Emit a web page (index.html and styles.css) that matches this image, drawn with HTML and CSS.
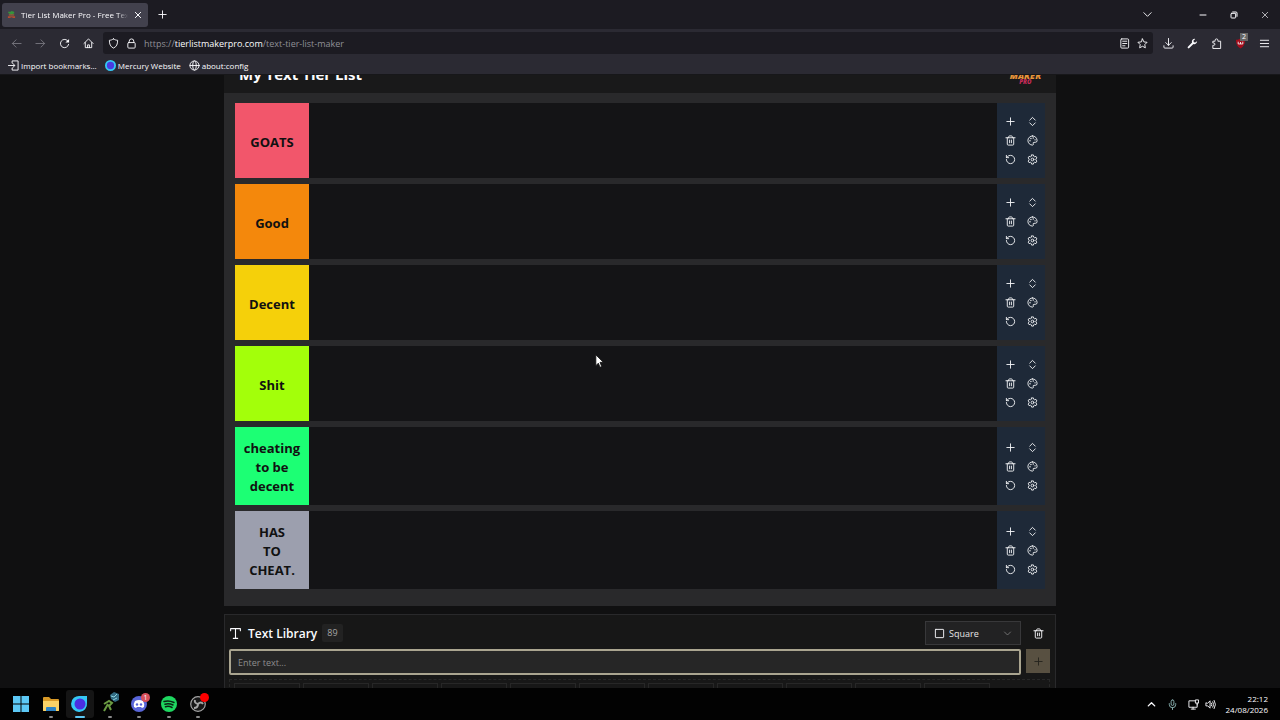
FILE: index.html
```html
<!DOCTYPE html>
<html lang="en">

<head>
    <meta charset="UTF-8">
    <title>Tier List Maker Pro - Free Text Tier List</title>
    <meta name="viewport" content="width=device-width, initial-scale=1.0">
    <link rel="stylesheet" href="styles.css">
</head>

<body>
    <!-- Shared icons -->
    <svg class="sprite" aria-hidden="true">
        <symbol id="i-plus" viewBox="0 0 24 24"><path d="M4 12h16M12 4v16"/></symbol>
        <symbol id="i-sort" viewBox="0 0 24 24"><path d="m6 9 6-6 6 6M6 15l6 6 6-6"/></symbol>
        <symbol id="i-trash" viewBox="0 0 24 24"><path d="M2 6h20M19 6v14a2 2 0 0 1-2 2H7a2 2 0 0 1-2-2V6M8 6V4a2 2 0 0 1 2-2h4a2 2 0 0 1 2 2v2M10 11v6M14 11v6"/></symbol>
        <symbol id="i-palette" viewBox="0 0 24 24"><path d="M12 2a10 10 0 0 0 0 20 2 2 0 0 0 1.700-3.200A2 2 0 0 1 15.300 16H18a4 4 0 0 0 4-4C22 6.500 17.500 2 12 2z"/><path d="M6.500 12.500h.1M8.500 7.500h.1M13.500 6.500h.1M17.500 10.500h.1" stroke-width="3"/></symbol>
        <symbol id="i-reset" viewBox="0 0 24 24"><path d="M3 12a9 9 0 1 0 9-9 9.700 9.700 0 0 0-6.700 2.700L3 8M3 3v5h5"/></symbol>
        <symbol id="i-gear" viewBox="0 0 24 24"><path d="M10 2h4l.7 3 1.800 1 3-.9 2 3.500L19.300 11v2l2.200 2.400-2 3.500-3-.9-1.800 1-.7 3h-4l-.7-3-1.800-1-3 .9-2-3.500L4.700 13v-2L2.500 8.600l2-3.500 3 .9 1.800-1z"/><circle cx="12" cy="12" r="3"/></symbol>
        <symbol id="i-down" viewBox="0 0 24 24"><path d="m4 8 8 8 8-8"/></symbol>
        <symbol id="i-close" viewBox="0 0 24 24"><path d="M4 4l16 16M20 4 4 20"/></symbol>
    </svg>

    <header class="browser">
        <div class="tabbar">
            <div class="tab">
                <svg class="favicon" viewBox="0 0 10 10"><path d="M1 2h3l1-1 3 1v2L5 5 2 4z" fill="#37933c"/><path d="M2 5h6v1H2z" fill="#bd722e"/><path d="M1 7h8v2H7L5 8 3 9H1z" fill="#b44c30"/></svg>
                <span class="tab-title">Tier List Maker Pro - Free Text Tier List</span>
                <button class="tab-close" aria-label="Close tab"><svg class="icon small"><use href="#i-close"/></svg></button>
            </div>
            <button class="new-tab" aria-label="New tab"><svg class="icon"><use href="#i-plus"/></svg></button>
            <div class="window-buttons">
                <button class="list-tabs" aria-label="List all tabs"><svg class="icon"><use href="#i-down"/></svg></button>
                <button aria-label="Minimize"><svg class="icon small" viewBox="0 0 24 24"><path d="M3 12h18"/></svg></button>
                <button aria-label="Restore"><svg class="icon small" viewBox="0 0 24 24"><rect x="3" y="7" width="14" height="14" rx="2"/><path d="M8 3h10a3 3 0 0 1 3 3v10"/></svg></button>
                <button aria-label="Close"><svg class="icon small thin"><use href="#i-close"/></svg></button>
            </div>
        </div>

        <div class="navbar">
            <button class="nav-btn off" aria-label="Back"><svg class="icon" viewBox="0 0 24 24"><path d="M22 12H3M11 4l-8 8 8 8"/></svg></button>
            <button class="nav-btn off" aria-label="Forward"><svg class="icon" viewBox="0 0 24 24"><path d="M2 12h19M13 4l8 8-8 8"/></svg></button>
            <button class="nav-btn" aria-label="Reload"><svg class="icon" viewBox="0 0 24 24"><path d="M21 14a9 9 0 1 1-2.500-8.300L21 8"/><path d="M22 2v8h-8z" fill="currentColor" stroke="none"/></svg></button>
            <button class="nav-btn" aria-label="Home"><svg class="icon" viewBox="0 0 24 24"><path d="M2 12 12 2l10 10M5 10v11h14V10M10 21v-6h4v6"/></svg></button>
            <div class="urlbar">
                <svg class="icon" viewBox="0 0 24 24"><path d="M12 2c3 2 6 3 9 3 0 8-2 14-9 17C5 19 3 13 3 5c3 0 6-1 9-3z"/></svg>
                <svg class="icon" viewBox="0 0 24 24"><rect x="4" y="10" width="16" height="12" rx="2"/><path d="M7 10V7a5 5 0 0 1 10 0v3"/></svg>
                <p class="url">https://<b>tierlistmakerpro.com</b>/text-tier-list-maker</p>
                <svg class="icon" viewBox="0 0 24 24"><rect x="4" y="2" width="17" height="20" rx="2"/><path d="M8 7h9M8 12h9M8 17h5"/></svg>
                <svg class="icon" viewBox="0 0 24 24"><path d="m12 2 3 6.500 7 .9-5 5 1.200 7L12 18l-6.200 3.400 1.200-7-5-5 7-.9z"/></svg>
            </div>
            <div class="toolbar">
                <button aria-label="Downloads"><svg class="icon" viewBox="0 0 24 24"><path d="M12 1v15M6 10l6 6 6-6M2 17v3a2 2 0 0 0 2 2h16a2 2 0 0 0 2-2v-3"/></svg></button>
                <button aria-label="Tools"><svg class="icon" viewBox="0 0 24 24"><path d="M22 7a6 6 0 0 1-8 6L5 22a2 2 0 0 1-3-3l9-9a6 6 0 0 1 7-8l-4 4 1 3 3 1z" fill="currentColor" stroke="none"/></svg></button>
                <button aria-label="Extensions"><svg class="icon" viewBox="0 0 24 24"><path d="M4 22v-6h2a2.500 2.500 0 0 0 0-5H4V7h5V5a3 3 0 0 1 6 0v2h6v15z"/></svg></button>
                <button class="blocker" aria-label="Ad blocker">
                    <svg class="icon" viewBox="0 0 24 24"><path d="M12 1c3 2 6 3 10 3 0 9-3 15-10 19C5 19 2 13 2 4c4 0 7-1 10-3z" fill="#a30d1c" stroke="none"/><path d="M7 9v4h5V9v4h5V9" stroke="#eee"/></svg>
                    <span class="blocker-count">2</span>
                </button>
                <button aria-label="Menu"><svg class="icon" viewBox="0 0 24 24"><path d="M3 5h18M3 12h18M3 19h18"/></svg></button>
            </div>
        </div>

        <nav class="bookmarks">
            <a href="#"><svg class="icon" viewBox="0 0 24 24"><path d="M9 6V2h13v20H9v-4M1 12h13M10 7l5 5-5 5"/></svg>Import bookmarks...</a>
            <a href="#"><svg class="icon" viewBox="0 0 24 24"><circle cx="12" cy="12" r="10" fill="#4a3be0" stroke="#35c8f4" stroke-width="4"/></svg>Mercury Website</a>
            <a href="#"><svg class="icon" viewBox="0 0 24 24"><circle cx="12" cy="12" r="10"/><ellipse cx="12" cy="12" rx="4" ry="10"/><path d="M2 12h20"/></svg>about:config</a>
        </nav>
    </header>

    <main class="page">
        <div class="content">
            <section class="board">
                <header class="board-header">
                    <h1>My Text Tier List</h1>
                    <div class="logo"><span class="logo-maker">MAKER</span><span class="logo-pro">PRO</span></div>
                </header>
                <div class="tiers" id="tiers">
                    <div class="tier"><h2 class="label red">GOATS</h2><div class="drop"></div></div>
                    <div class="tier"><h2 class="label orange">Good</h2><div class="drop"></div></div>
                    <div class="tier"><h2 class="label yellow">Decent</h2><div class="drop"></div></div>
                    <div class="tier"><h2 class="label lime">Shit</h2><div class="drop"></div></div>
                    <div class="tier"><h2 class="label green">cheating<br>to be<br>decent</h2><div class="drop"></div></div>
                    <div class="tier"><h2 class="label grey">HAS<br>TO<br>CHEAT.</h2><div class="drop"></div></div>
                </div>
            </section>

            <section class="library">
                <div class="library-header">
                    <svg class="icon type-icon" viewBox="0 0 24 24"><path d="M3 7V3h18v4M12 3v18M8 21h8"/></svg>
                    <h2>Text Library</h2>
                    <span class="count">89</span>
                    <div class="shape">
                        <svg class="icon" viewBox="0 0 24 24"><rect x="3" y="3" width="18" height="18" rx="1"/></svg>
                        <select aria-label="Shape">
                            <option>Square</option>
                        </select>
                        <svg class="icon shape-arrow"><use href="#i-down"/></svg>
                    </div>
                    <button class="clear" aria-label="Clear library"><svg class="icon"><use href="#i-trash"/></svg></button>
                </div>
                <form class="add-form">
                    <input type="text" placeholder="Enter text..." aria-label="Enter text" autofocus>
                    <button type="button" aria-label="Add text"><svg class="icon"><use href="#i-plus"/></svg></button>
                </form>
                <div class="items">
                    <div></div><div></div><div></div><div></div><div></div><div></div>
                    <div></div><div></div><div></div><div></div><div></div>
                </div>
            </section>
        </div>
    </main>

    <footer class="taskbar">
        <div class="apps">
            <button aria-label="Start"><svg viewBox="0 0 16 16"><path d="M0 0h7.500v7.500H0zM8.500 0H16v7.500H8.500zM0 8.500h7.500V16H0zM8.500 8.500H16V16H8.500z" fill="#5cc8f5"/></svg></button>
            <button class="open" aria-label="File Explorer"><svg viewBox="0 0 16 16"><path d="M0 2q0-1 1-1h5l2 2h7q1 0 1 1v11H0z" fill="#d99a27"/><path d="M0 5h16v9q0 1-1 1H1q-1 0-1-1z" fill="#f9d267"/><path d="M3 15v-3q0-1 1-1h8q1 0 1 1v3z" fill="#2b83c6"/></svg></button>
            <button class="open active" aria-label="Mercury"><svg viewBox="0 0 16 16"><path d="M8 0h7v7a8 8 0 1 1-7-7z" fill="#35c8f4"/><circle cx="8" cy="8" r="5.500" fill="#4b2fe0"/></svg></button>
            <button class="open" aria-label="Game"><svg viewBox="0 0 16 16"><path d="m2 8 5-3 3 2-3 3 2 4M6 8l-4 7" fill="none" stroke="#6b9c42" stroke-width="2"/><path d="m8-1 4-3 5 2v6l-4 2-4-3z" fill="#326b83"/><path d="m9 0 3 1 3-3M11 4l4-2" fill="none" stroke="#8bd3df"/></svg></button>
            <button class="open" aria-label="Discord"><svg viewBox="0 0 16 16"><circle cx="8" cy="8" r="8" fill="#5865d8"/><path d="M4 5q4-2 8 0 2 3 1 6l-2 1-1-1H6l-1 1-2-1q-1-3 1-6z" fill="#fff"/><circle cx="6" cy="8.500" r="1.200" fill="#5865d8"/><circle cx="10" cy="8.500" r="1.200" fill="#5865d8"/></svg><span class="badge">1</span></button>
            <button class="open" aria-label="Spotify"><svg viewBox="0 0 16 16"><circle cx="8" cy="8" r="8" fill="#1ed760"/><path d="M3 5.500q5-1.500 10 1M4 8.200q4-1.200 8 .8M4.500 10.700q3.500-1 6.500.8" fill="none" stroke="#0b2413" stroke-width="1.500" stroke-linecap="round"/></svg></button>
            <button class="open" aria-label="OBS Studio"><svg viewBox="0 0 16 16"><circle cx="8" cy="8" r="7.300" fill="#171717" stroke="#a5a5a5" stroke-width="1.200"/><path d="M8 8q-4-1-3-4M8 8q3-3 5 0M8 8q0 4-4 4" fill="none" stroke="#a5a5a5" stroke-width="2"/></svg><span class="badge dot"></span></button>
        </div>
        <div class="tray">
            <svg class="icon chevron" viewBox="0 0 24 24"><path d="m5 15 7-7 7 7" stroke-width="3"/></svg>
            <svg class="icon mic" viewBox="0 0 24 24"><rect x="9" y="2" width="6" height="12" rx="3"/><path d="M5 10v2a7 7 0 0 0 14 0v-2M12 19v4"/></svg>
            <svg class="icon" viewBox="0 0 24 24"><path d="M15 4H2v14h18v-6M7 22h9M11 18v4"/><rect x="17" y="2" width="6" height="7"/><path d="M20 9v4"/></svg>
            <svg class="icon" viewBox="0 0 24 24"><path d="M2 9v6h4l5 5V4L6 9zM14 9q2 3 0 6M17 6q4 6 0 12M20 3q6 9 0 18"/></svg>
            <p class="clock"><time>22:12</time><br><time>24/08/2026</time></p>
        </div>
    </footer>

    <svg class="pointer" viewBox="0 0 12 18"><path d="M1 1v13l3-3 2 5 2-1-2-5h4z" fill="#fff" stroke="#111"/></svg>

    <script>
        // Every tier gets the same six controls
        var controls = [
            ["plus", "Add tier"], ["sort", "Move tier"],
            ["trash", "Delete tier"], ["palette", "Tier colour"],
            ["reset", "Reset tier"], ["gear", "Tier settings"]
        ];

        document.querySelectorAll("#tiers .tier").forEach(function (tier) {
            var box = document.createElement("div");
            box.className = "controls";
            box.innerHTML = controls.map(function (c) {
                return '<button aria-label="' + c[1] + '"><svg class="icon"><use href="#i-' + c[0] + '"/></svg></button>';
            }).join("");
            tier.appendChild(box);
        });
    </script>
</body>

</html>
```
FILE: styles.css
```css
* {
    margin: 0;
    padding: 0;
    box-sizing: border-box;
}

body {
    height: 100vh;
    display: flex;
    flex-direction: column;
    overflow: hidden;
    background: #101011;
    color: #fbfbfe;
    font-family: "Segoe UI", "Open Sans", "Noto Sans", sans-serif;
    font-size: 8px;
}

button {
    display: flex;
    align-items: center;
    justify-content: center;
    border: 0;
    background: none;
    color: inherit;
    font: inherit;
}

a {
    color: inherit;
    text-decoration: none;
}

.sprite {
    display: none;
}

.icon {
    flex: none;
    width: 11px;
    height: 11px;
    fill: none;
    stroke: currentColor;
    stroke-width: 2;
    stroke-linecap: round;
    stroke-linejoin: round;
}

.icon.small {
    width: 8px;
    height: 8px;
    stroke-width: 3;
}

.icon.thin {
    stroke-width: 2;
}

/* Browser window */

.browser {
    flex: none;
    background: #2b2a33;
    border-bottom: 1px solid #17171a;
}

.tabbar {
    display: flex;
    align-items: center;
    height: 29px;
    padding-left: 2px;
    background: #1c1b22;
}

.tab {
    display: flex;
    align-items: center;
    gap: 5px;
    width: 146px;
    height: 24px;
    padding: 0 5px;
    border-radius: 3px;
    background: #42414d;
}

.favicon {
    flex: none;
    width: 9px;
    height: 9px;
}

.tab-title {
    flex: 1;
    overflow: hidden;
    white-space: nowrap;
    mask-image: linear-gradient(to right, #000 90%, transparent);
}

.tab-close {
    width: 10px;
    height: 16px;
}

.new-tab {
    width: 28px;
    height: 24px;
}

.window-buttons {
    display: flex;
    margin-left: auto;
}

.window-buttons button {
    width: 31px;
    height: 29px;
}

.window-buttons .list-tabs {
    margin-right: 24px;
}

.navbar {
    display: flex;
    align-items: center;
    height: 28px;
    padding: 0 4px;
}

.nav-btn {
    width: 24px;
    height: 24px;
}

.off {
    color: #77767f;
}

.urlbar {
    flex: 1;
    display: flex;
    align-items: center;
    gap: 7px;
    height: 22px;
    margin-left: 3px;
    padding: 0 5px;
    border-radius: 3px;
    background: #1c1b22;
}

.url {
    flex: 1;
    color: #8f8f96;
    font-size: 9px;
}

.url b {
    color: #fbfbfe;
    font-weight: 400;
}

.toolbar {
    display: flex;
    margin-left: 3px;
}

.toolbar button {
    position: relative;
    width: 24px;
    height: 24px;
}

.blocker-count {
    position: absolute;
    top: 2px;
    right: 4px;
    padding: 0 2px;
    background: #666;
    font-size: 7px;
    line-height: 8px;
}

.bookmarks {
    display: flex;
    gap: 8px;
    height: 17px;
    padding: 0 8px;
}

.bookmarks a {
    display: flex;
    align-items: center;
    gap: 2px;
}

/* Page */

.page {
    flex: 1;
    min-height: 0;
    overflow: hidden;
}

.content {
    width: 65%;
    min-width: 600px;
    margin: -22px auto 0;
}

.board {
    background: #29292b;
}

.board-header {
    display: flex;
    align-items: flex-end;
    justify-content: space-between;
    height: 40px;
    padding: 0 15px 8px;
    background: #19191a;
}

.board-header h1 {
    font-size: 15px;
    line-height: 22px;
}

.logo {
    display: flex;
    flex-direction: column;
    align-items: center;
    color: #e8943a;
    font-size: 9px;
    font-weight: 800;
    font-style: italic;
}

.logo-maker {
    line-height: 8px;
}

.logo-pro {
    color: #c52b58;
    font-size: 6px;
    line-height: 5px;
}

.tiers {
    display: flex;
    flex-direction: column;
    gap: 6px;
    padding: 10px 11px 17px;
}

.tier {
    display: flex;
    min-height: 75px;
    background: #141416;
}

.label {
    display: flex;
    align-items: center;
    justify-content: center;
    width: 74px;
    padding: 12px 6px 9px;
    color: #111;
    font-size: 13px;
    line-height: 19px;
    text-align: center;
}

.red { background: #f2566b; }
.orange { background: #f4880c; }
.yellow { background: #f5d00a; }
.lime { background: #a3ff0a; }
.green { background: #1cff74; }
.grey { background: #9c9fae; }

.drop {
    flex: 1;
}

.controls {
    display: grid;
    grid-template-columns: 22px 22px;
    grid-auto-rows: 19px;
    place-content: center;
    width: 48px;
    background: #1e2938;
    color: #f3f4f6;
}

/* Text library */

.library {
    height: 200px;
    margin-top: 8px;
    padding: 6px 5px 6px 4px;
    border: 1px solid #29292b;
    background: #171717;
    font-size: 9px;
}

.library-header {
    display: flex;
    align-items: center;
    height: 24px;
    margin-bottom: 4px;
}

.library-header h2 {
    margin: 0 5px 0 6px;
    font-size: 12px;
    font-weight: 600;
}

.type-icon {
    width: 13px;
    height: 13px;
}

.count {
    padding: 0 5px;
    border-radius: 2px;
    background: #222;
    color: #a5a5a5;
    line-height: 18px;
}

.shape {
    display: flex;
    align-items: center;
    gap: 4px;
    width: 96px;
    height: 24px;
    margin-left: auto;
    padding: 0 8px;
    border: 1px solid #38383a;
    background: #222223;
}

.shape select {
    flex: 1;
    appearance: none;
    border: 0;
    background: none;
    color: #e5e5e5;
    font: inherit;
}

.shape-arrow {
    width: 9px;
    height: 9px;
    color: #8a8a8a;
}

.clear {
    width: 24px;
    height: 24px;
    margin-left: 5px;
}

.add-form {
    display: flex;
    gap: 5px;
}

.add-form input {
    flex: 1;
    height: 26px;
    padding: 0 7px;
    border: 2px solid #aaa590;
    border-radius: 2px;
    outline: 0;
    background: #262626;
    color: #fff;
    font: inherit;
}

.add-form input::placeholder {
    color: #8e8e8e;
}

.add-form button {
    width: 24px;
    height: 24px;
    background: #585041;
    color: #25231e;
}

.items {
    display: grid;
    grid-template-columns: repeat(11, 66px);
    gap: 3px;
    margin-top: 4px;
    padding: 3px 4px;
    border: 1px dashed #282828;
}

.items div {
    height: 66px;
    border: 1px solid #272727;
}

/* Taskbar */

.taskbar {
    flex: none;
    display: flex;
    align-items: center;
    justify-content: space-between;
    height: 32px;
    padding: 0 12px 0 7px;
    background: #020202;
}

.apps,
.tray {
    display: flex;
    align-items: center;
}

.apps {
    justify-content: space-between;
    width: 205px;
}

.apps button {
    position: relative;
    width: 28px;
    height: 28px;
    border-radius: 3px;
}

.apps svg {
    width: 16px;
    height: 16px;
    overflow: visible;
}

.apps .active {
    background: #151515;
}

.open::after {
    content: "";
    position: absolute;
    bottom: 0;
    width: 4px;
    height: 2px;
    border-radius: 1px;
    background: #8a8a8a;
}

.active::after {
    width: 10px;
    background: #5cc8f5;
}

.badge {
    position: absolute;
    top: 3px;
    right: 3px;
    width: 9px;
    height: 9px;
    border-radius: 50%;
    background: #d9505a;
    font-size: 7px;
    line-height: 9px;
}

.badge.dot {
    background: #f00;
}

.tray {
    gap: 6px;
}

.chevron {
    margin-right: 4px;
}

.mic {
    margin-right: 4px;
    color: #8fb9b8;
}

.clock {
    margin-left: 4px;
    line-height: 11px;
    text-align: right;
}

/* Mouse pointer, above everything */

.pointer {
    position: absolute;
    top: 354px;
    left: 595px;
    width: 10px;
    height: 15px;
}
```
